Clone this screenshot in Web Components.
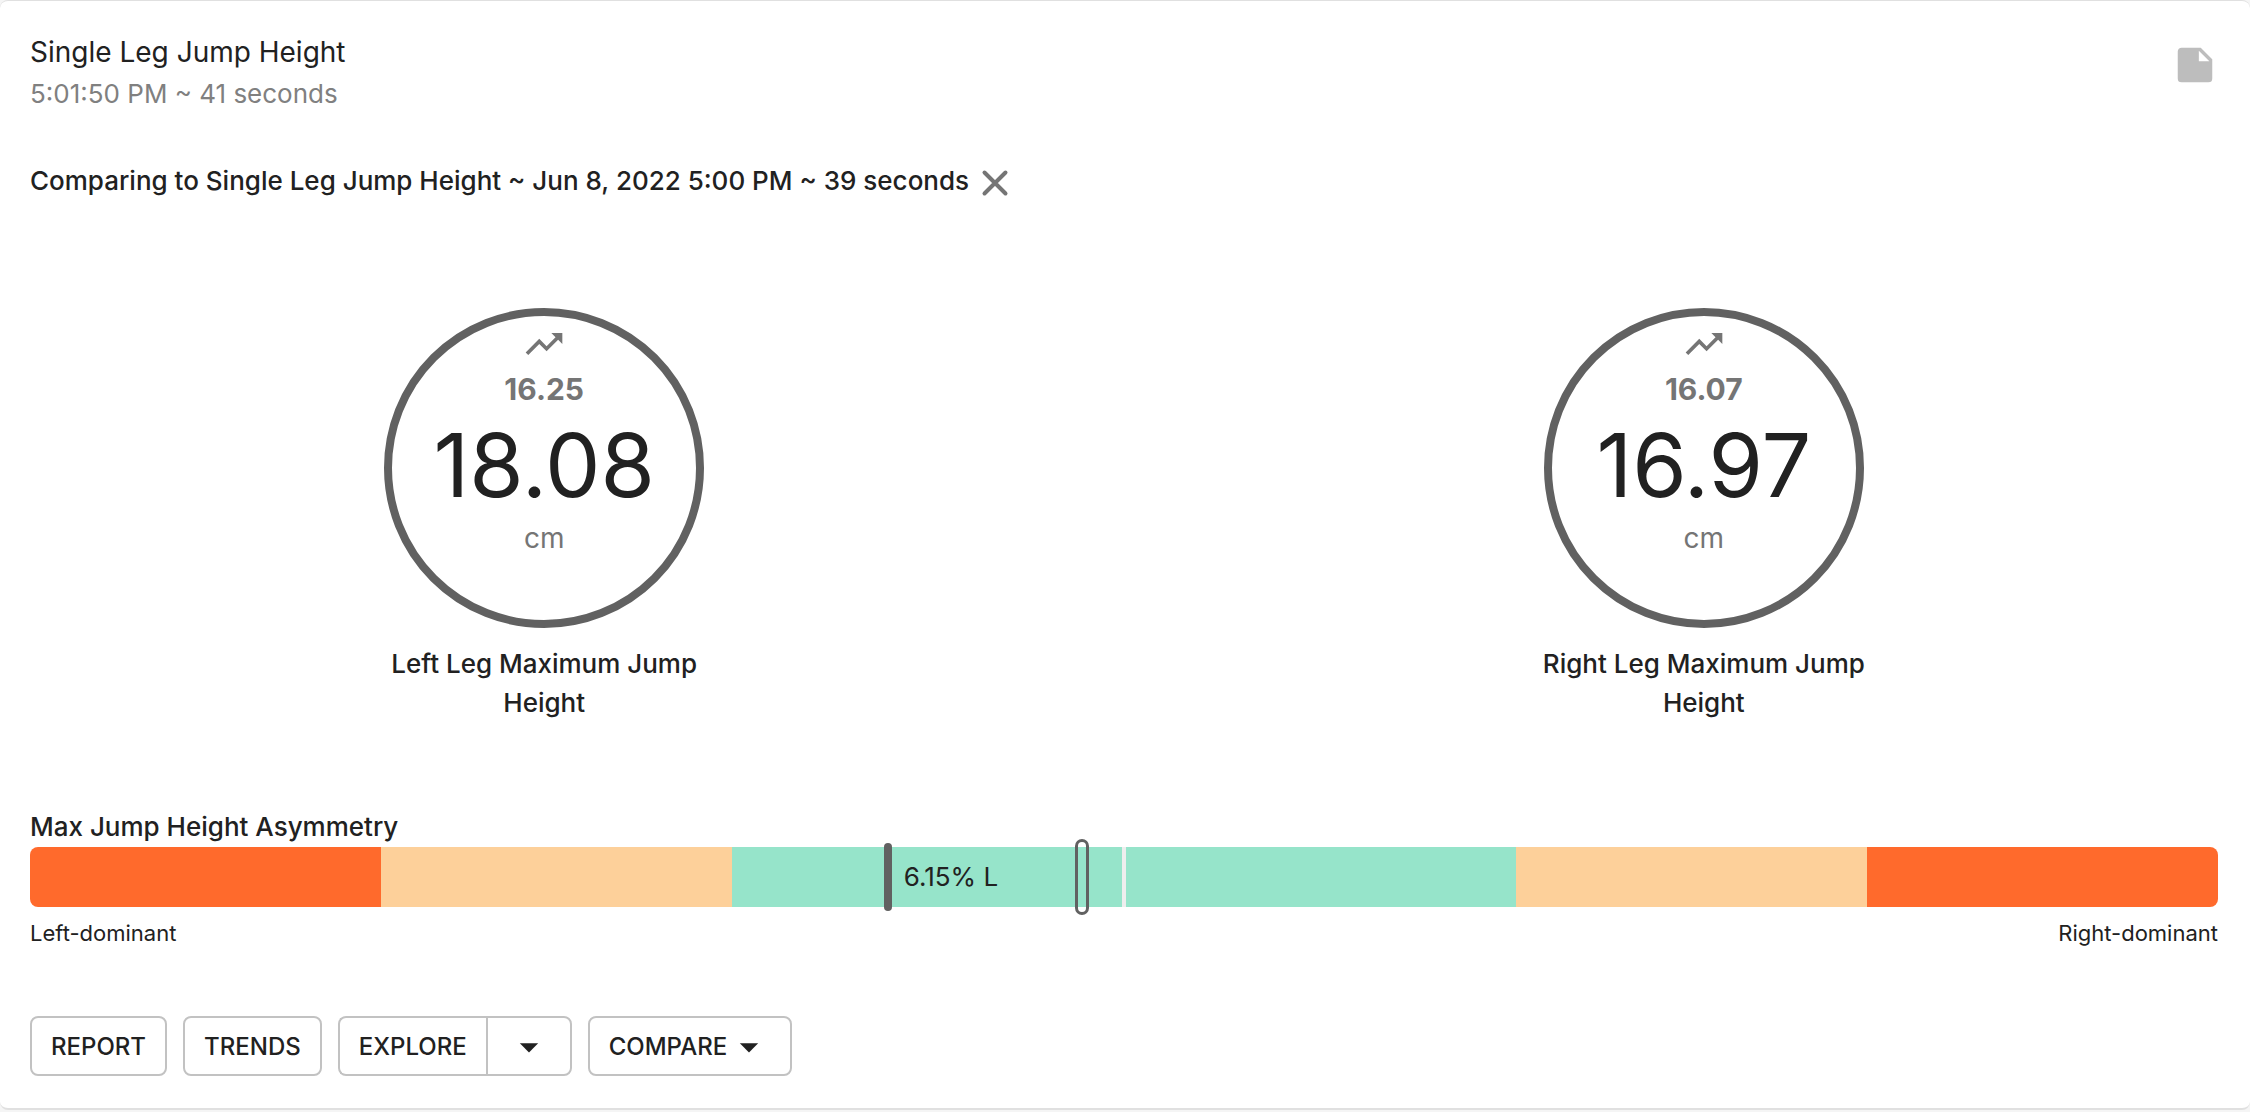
<!DOCTYPE html>
<html lang="en">
<head>
<meta charset="utf-8">
<title>Single Leg Jump Height</title>
<style>
    body {
        margin: 0;
        background: #f5f5f5;
        color: #212121;
        font-family: Inter, "Liberation Sans", sans-serif;
        font-size: 26px;
    }
</style>
</head>
<body>
<result-card>
    <result-header slot="header" time="5:01:50 PM ~ 41 seconds">Single Leg Jump Height</result-header>
    <compare-banner>Comparing to Single Leg Jump Height ~ Jun 8, 2022 5:00 PM ~ 39 seconds</compare-banner>
    <metric-row>
        <metric-gauge value="18.08" previous="16.25" unit="cm">Left Leg Maximum Jump Height</metric-gauge>
        <metric-gauge value="16.97" previous="16.07" unit="cm">Right Leg Maximum Jump Height</metric-gauge>
    </metric-row>
    <asymmetry-bar label="6.15% L" current="39.2" previous="48.1">Max Jump Height Asymmetry</asymmetry-bar>
    <card-actions slot="actions">
        <action-button>REPORT</action-button>
        <action-button>TRENDS</action-button>
        <split-button>EXPLORE</split-button>
        <action-button menu>COMPARE</action-button>
    </card-actions>
</result-card>

<script>
const CARET = `<svg viewBox="0 0 24 24" width="44" height="44" fill="currentColor" aria-hidden="true"><path d="M7 10l5 5 5-5z"/></svg>`;

// Shared look of the outlined buttons
const BUTTON_STYLE = `
    button {
        display: flex;
        align-items: center;
        height: 60px;
        box-sizing: border-box;
        padding: 1px 19px 0;
        border: 2px solid #c2c2c2;
        border-radius: 8px;
        background: #fff;
        color: inherit;
        font: 500 24px/40px Inter, "Liberation Sans", sans-serif;
        white-space: nowrap;
        cursor: pointer;
    }

    button:hover {
        background: #f5f5f5;
    }

    svg {
        display: block;
    }
`;

class ResultCard extends HTMLElement {
    connectedCallback() {
        this.attachShadow({ mode: 'open' });
        this.shadowRoot.innerHTML = `
            <style>
                :host {
                    display: block;
                }

                article {
                    padding: 31px 32px 32px 30px;
                    background: #fff;
                    border-top: 1px solid #e0e0e0;
                    border-bottom: 2px solid #e0e0e0;
                    border-radius: 8px;
                }
            </style>

            <article>
                <slot name="header"></slot>
                <slot></slot>
                <slot name="actions"></slot>
            </article>
        `;
    }
}

class ResultHeader extends HTMLElement {
    connectedCallback() {
        this.attachShadow({ mode: 'open' });
        this.shadowRoot.innerHTML = `
            <style>
                :host {
                    display: block;
                }

                header {
                    display: flex;
                    justify-content: space-between;
                    align-items: flex-start;
                }

                .titles {
                    display: flex;
                    flex-direction: column;
                    gap: 2px;
                }

                h1, p {
                    margin: 0;
                    line-height: 40px;
                    font-weight: 400;
                }

                h1 {
                    font-size: 28px;
                }

                p {
                    font-size: 26px;
                    color: #808080;
                }

                button {
                    margin-top: 10px;
                    padding: 0;
                    border: 0;
                    background: none;
                    color: #bdbdbd;
                    cursor: pointer;
                }

                svg {
                    display: block;
                }
            </style>

            <header>
                <div class="titles">
                    <h1><slot></slot></h1>
                    <p>${this.getAttribute('time')}</p>
                </div>
                <button type="button" aria-label="Notes">
                    <svg viewBox="0 0 24 24" width="46" height="46" fill="currentColor"><path d="M14 10V4.500L19.500 10M5 3C3.890 3 3 3.890 3 5V19A2 2 0 0 0 5 21H19A2 2 0 0 0 21 19V9L15 3H5Z"/></svg>
                </button>
            </header>
        `;
    }
}

class CompareBanner extends HTMLElement {
    connectedCallback() {
        this.attachShadow({ mode: 'open' });
        this.shadowRoot.innerHTML = `
            <style>
                :host {
                    display: flex;
                    align-items: center;
                    gap: 4px;
                    margin-top: 47px;
                    font-weight: 500;
                    line-height: 40px;
                }

                span {
                    padding-bottom: 4px;
                }

                button {
                    padding: 0;
                    border: 0;
                    background: none;
                    color: #757575;
                    cursor: pointer;
                }

                svg {
                    display: block;
                }
            </style>

            <span><slot></slot></span>
            <button type="button" aria-label="Stop comparing">
                <svg viewBox="0 0 44 44" width="44" height="44" fill="none" stroke="currentColor" stroke-width="4" stroke-linecap="round"><path d="M11.500 11.500l21 21M32.500 11.500l-21 21"/></svg>
            </button>
        `;
    }
}

class MetricRow extends HTMLElement {
    connectedCallback() {
        this.attachShadow({ mode: 'open' });
        this.shadowRoot.innerHTML = `
            <style>
                :host {
                    display: grid;
                    grid-template-columns: 1fr 1fr;
                    column-gap: 6%;
                    justify-items: center;
                    margin-top: 103px;
                }
            </style>

            <slot></slot>
        `;
    }
}

class MetricGauge extends HTMLElement {
    connectedCallback() {
        this.attachShadow({ mode: 'open' });
        this.shadowRoot.innerHTML = `
            <style>
                :host {
                    display: flex;
                    flex-direction: column;
                    align-items: center;
                    gap: 16px;
                    width: 340px;
                }

                .ring {
                    display: flex;
                    flex-direction: column;
                    align-items: center;
                    box-sizing: border-box;
                    width: 320px;
                    height: 320px;
                    padding-top: 6px;
                    border: 8px solid #616161;
                    border-radius: 50%;
                    color: #757575;
                }

                .previous {
                    font-size: 30px;
                    font-weight: 700;
                    line-height: 46px;
                }

                .value {
                    font-size: 88px;
                    line-height: 106px;
                    color: #212121;
                }

                .unit {
                    font-size: 28px;
                    line-height: 40px;
                }

                .label {
                    font-weight: 500;
                    line-height: 39px;
                    text-align: center;
                }
            </style>

            <div class="ring">
                <svg viewBox="0 0 24 24" width="44" height="44" fill="currentColor" aria-hidden="true"><path d="M16 6l2.290 2.290-4.880 4.880-4-4L2 16.590 3.410 18l6-6 4 4 6.300-6.290L22 12V6z"/></svg>
                <span class="previous">${this.getAttribute('previous')}</span>
                <span class="value">${this.getAttribute('value')}</span>
                <span class="unit">${this.getAttribute('unit')}</span>
            </div>
            <div class="label"><slot></slot></div>
        `;
    }
}

class AsymmetryBar extends HTMLElement {
    connectedCallback() {
        this.attachShadow({ mode: 'open' });
        this.shadowRoot.innerHTML = `
            <style>
                :host {
                    display: block;
                    margin-top: 85px;
                }

                h2 {
                    margin: 0;
                    font-size: 26px;
                    font-weight: 500;
                    line-height: 40px;
                }

                .track {
                    position: relative;
                    height: 60px;
                }

                .zones {
                    display: grid;
                    grid-template-columns: 9fr 9fr 10fr 4px 10fr 9fr 9fr;
                    height: 100%;
                    border-radius: 8px;
                    overflow: hidden;
                }

                .high {
                    background: #ff6a2c;
                }

                .medium {
                    background: #fdd09a;
                }

                .low {
                    background: #96e4ca;
                }

                .center {
                    background: #eeeeee;
                }

                /* Markers lie over the zones, placed by share of the track */
                .marker {
                    position: absolute;
                    top: 50%;
                    box-sizing: border-box;
                    transform: translate(-50%, -50%);
                }

                .current {
                    left: ${this.getAttribute('current')}%;
                    width: 8px;
                    height: 68px;
                    border-radius: 4px;
                    background: #616161;
                }

                .previous {
                    left: ${this.getAttribute('previous')}%;
                    width: 14px;
                    height: 76px;
                    border: 3px solid #616161;
                    border-radius: 7px;
                }

                .reading {
                    position: absolute;
                    top: 0;
                    left: ${this.getAttribute('current')}%;
                    padding-left: 16px;
                    line-height: 60px;
                }

                .ends {
                    display: flex;
                    justify-content: space-between;
                    margin-top: 8px;
                    font-size: 22px;
                    line-height: 36px;
                }
            </style>

            <h2><slot></slot></h2>
            <div class="track">
                <div class="zones">
                    <div class="high"></div>
                    <div class="medium"></div>
                    <div class="low"></div>
                    <div class="center"></div>
                    <div class="low"></div>
                    <div class="medium"></div>
                    <div class="high"></div>
                </div>
                <div class="marker current"></div>
                <div class="marker previous"></div>
                <span class="reading">${this.getAttribute('label')}</span>
            </div>
            <div class="ends"><span>Left-dominant</span><span>Right-dominant</span></div>
        `;
    }
}

class CardActions extends HTMLElement {
    connectedCallback() {
        this.attachShadow({ mode: 'open' });
        this.shadowRoot.innerHTML = `
            <style>
                :host {
                    display: flex;
                    flex-wrap: wrap;
                    gap: 16px;
                    margin-top: 65px;
                }
            </style>

            <slot></slot>
        `;
    }
}

class ActionButton extends HTMLElement {
    connectedCallback() {
        this.attachShadow({ mode: 'open' });
        this.shadowRoot.innerHTML = `
            <style>
                :host {
                    display: block;
                }

                ${BUTTON_STYLE}
            </style>

            <button type="button"><slot></slot>${this.hasAttribute('menu') ? CARET : ''}</button>
        `;
    }
}

class SplitButton extends HTMLElement {
    connectedCallback() {
        this.attachShadow({ mode: 'open' });
        this.shadowRoot.innerHTML = `
            <style>
                :host {
                    display: flex;
                }

                ${BUTTON_STYLE}

                .main {
                    border-right: 0;
                    border-radius: 8px 0 0 8px;
                }

                .toggle {
                    border-radius: 0 8px 8px 0;
                }
            </style>

            <button type="button" class="main"><slot></slot></button>
            <button type="button" class="toggle" aria-label="More options">${CARET}</button>
        `;
    }
}

customElements.define('result-card', ResultCard);
customElements.define('result-header', ResultHeader);
customElements.define('compare-banner', CompareBanner);
customElements.define('metric-row', MetricRow);
customElements.define('metric-gauge', MetricGauge);
customElements.define('asymmetry-bar', AsymmetryBar);
customElements.define('card-actions', CardActions);
customElements.define('action-button', ActionButton);
customElements.define('split-button', SplitButton);
</script>
</body>
</html>
